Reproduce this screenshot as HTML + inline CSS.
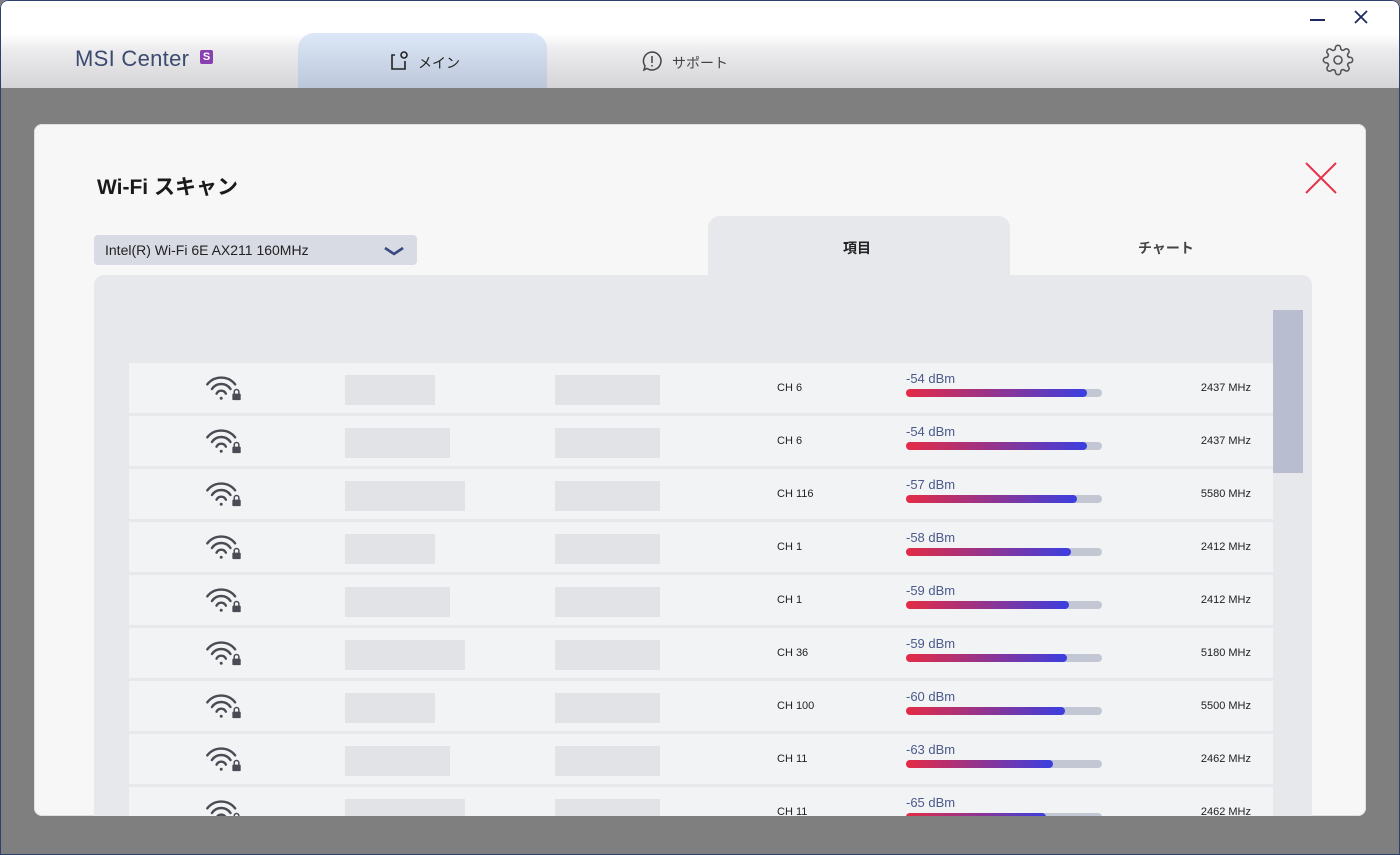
<!DOCTYPE html>
<html><head><meta charset="utf-8"><style>
*{margin:0;padding:0;box-sizing:border-box}
body{width:1400px;height:855px;overflow:hidden;position:relative;font-family:"Liberation Sans","Noto Sans CJK JP",sans-serif;background:#7f7f7f}
.win{position:absolute;inset:0;border-radius:8px 8px 0 0;overflow:hidden;background:#7f7f7f}
.frame{position:absolute;inset:0;border:1px solid #2f3f6e;border-radius:8px 8px 0 0;pointer-events:none}
.hdr{position:absolute;left:0;top:0;width:1400px;height:88px;background:linear-gradient(#fff 0,#fff 34px,#ececee 50px,#d5d5d7 88px)}
.abs{position:absolute}
.dlg{position:absolute;left:34px;top:124px;width:1332px;height:692px;background:#f7f7f7;border-radius:8px;box-shadow:inset 0 0 0 1px #e0e0e0;overflow:hidden}
.row{position:absolute;left:95px;width:1144px;height:50px;background:#f2f3f5}
.blk{position:absolute;background:#e2e3e6}
.bar{position:absolute;left:777px;top:26px;width:196px;height:8px;background:#c3c7d4;border-radius:4px}
.fill{height:8px;border-radius:4px;background:linear-gradient(90deg,#e42b45,#9a3388 45%,#3a3fe0)}
.db{position:absolute;left:777px;top:8px;font-size:13px;color:#4a5a8a}
.ch{position:absolute;left:648px;top:19px;font-size:11px;color:#222}
.mhz{position:absolute;right:22px;top:19px;font-size:11px;color:#222}
</style></head><body><div class="win">
<div class="hdr">
<div class="abs" style="left:75px;top:46px;font-size:22px;color:#3c4a70;letter-spacing:0.3px">MSI Center</div>
<div class="abs" style="left:200px;top:50px;width:13px;height:14px;background:#8a3fb0;color:#fff;font-size:11px;font-weight:bold;text-align:center;line-height:14px;border-radius:2px">S</div>
<div class="abs" style="left:298px;top:33px;width:249px;height:55px;background:linear-gradient(#dce8f7,#bcc8da);border-radius:16px 16px 0 0"></div>
<svg class="abs" style="left:388px;top:50px" width="22" height="22" viewBox="0 0 22 22" fill="none" stroke="#222" stroke-width="1.6"><path d="M7 5H4v14h13v-8"/><circle cx="16" cy="5" r="3"/></svg>
<div class="abs" style="left:418px;top:53px;font-size:14px;color:#222">メイン</div>
<svg class="abs" style="left:641px;top:50px" width="22" height="22" viewBox="0 0 22 22" fill="none" stroke="#444" stroke-width="1.5"><path d="M11 2a9 9 0 1 1-5 16.5L3 20l1-4A9 9 0 0 1 11 2z"/><path d="M11 6v7M11 15v1.5"/></svg>
<div class="abs" style="left:672px;top:53px;font-size:14px;color:#444">サポート</div>
<div class="abs" style="left:1310px;top:19px;width:15px;height:2px;background:#1d2a60"></div>
<svg class="abs" style="left:1354px;top:10px" width="14" height="14" viewBox="0 0 14 14" stroke="#1d2a60" stroke-width="1.8"><path d="M1 1l12 12M13 1L1 13"/></svg>
<svg class="abs" style="left:1322px;top:44px" width="32" height="32" viewBox="0 0 24 24" fill="none" stroke="#555" stroke-width="1.2"><circle cx="12" cy="12" r="3"/><path d="M19.4 15a1.65 1.65 0 0 0 .33 1.82l.06.06a2 2 0 1 1-2.830 2.83l-.06-.06a1.65 1.65 0 0 0-1.82-.33 1.65 1.65 0 0 0-1 1.51V21a2 2 0 1 1-4 0v-.09A1.65 1.65 0 0 0 9 19.4a1.65 1.65 0 0 0-1.82.33l-.06.06a2 2 0 1 1-2.83-2.830l.06-.06a1.65 1.65 0 0 0 .33-1.82 1.65 1.65 0 0 0-1.51-1H3a2 2 0 1 1 0-4h.09A1.65 1.65 0 0 0 4.6 9a1.65 1.65 0 0 0-.33-1.82l-.06-.06a2 2 0 1 1 2.83-2.83l.06.06a1.65 1.65 0 0 0 1.820.33H9a1.65 1.65 0 0 0 1-1.51V3a2 2 0 1 1 4 0v.09a1.65 1.65 0 0 0 1 1.51 1.65 1.65 0 0 0 1.82-.33l.06-.06a2 2 0 1 1 2.83 2.830l-.06.06a1.65 1.65 0 0 0-.33 1.82V9a1.65 1.65 0 0 0 1.51 1H21a2 2 0 1 1 0 4h-.09a1.65 1.65 0 0 0-1.51 1z"/></svg>
</div>
<div class="dlg">
<div class="abs" style="left:63px;top:47px;font-size:21px;font-weight:bold;color:#1a1a1a">Wi-Fi スキャン</div>
<svg class="abs" style="left:1271px;top:38px" width="32" height="32" viewBox="0 0 32 32" stroke="#e8344a" stroke-width="2"><path d="M1 1l30 30M31 1L1 31"/></svg>
<div class="abs" style="left:60px;top:111px;width:323px;height:30px;background:#d8dae4;border-radius:4px"></div>
<div class="abs" style="left:71px;top:118px;font-size:14px;color:#222">Intel(R) Wi-Fi 6E AX211 160MHz</div>
<svg class="abs" style="left:349px;top:121px" width="22" height="12" viewBox="0 0 22 12" fill="none" stroke="#3a4a80" stroke-width="2.6"><path d="M2 3l9 6 9-6"/></svg>
<div class="abs" style="left:674px;top:92px;width:302px;height:62px;background:#e7e8ec;border-radius:12px 12px 0 0"></div>
<div class="abs" style="left:809px;top:114px;font-size:14px;font-weight:bold;color:#222">項目</div>
<div class="abs" style="left:1104px;top:114px;font-size:14px;font-weight:bold;color:#444">チャート</div>
<div class="abs" style="left:60px;top:151px;width:1218px;height:560px;background:#e7e8ec;border-radius:10px 10px 0 0;overflow:hidden">
<div class="abs" style="left:1179px;top:35px;width:30px;height:163px;background:#b8bdcf"></div>
<div id="rows"></div>
</div>
</div>
<div class="frame"></div>
</div>
<script>
var d=[["CH 6",-54,181,2437],["CH 6",-54,181,2437],["CH 116",-57,171,5580],["CH 1",-58,165,2412],["CH 1",-59,163,2412],["CH 36",-59,161,5180],["CH 100",-60,159,5500],["CH 11",-63,147,2462],["CH 11",-65,140,2462]];
var h="";d.forEach(function(r,i){var t=88+53*i;
h+='<div class="row" style="left:35px;top:'+t+'px"><svg style="position:absolute;left:75px;top:13px" width="40" height="26" viewBox="0 0 42 28" fill="none" stroke="#4a4c55" stroke-width="2.6" stroke-linecap="round"><path d="M3 9a19 19 0 0 1 30 0M8 14a12 12 0 0 1 20 0M13 19a5.5 5.5 0 0 1 10 0"/><circle cx="18" cy="24" r="1.6" fill="#4a4c55" stroke="none"/><rect x="30" y="19" width="9" height="7" rx="1" fill="#4a4c55" stroke="none"/><path d="M32 19v-2a2.5 2.5 0 0 1 5 0v2" stroke-width="1.6"/></svg>'+
'<div class="blk" style="left:216px;top:12px;width:'+(90+(i%3)*15)+'px;height:30px"></div><div class="blk" style="left:426px;top:12px;width:105px;height:30px"></div>'+
'<div class="ch">'+r[0]+'</div><div class="db">'+r[1]+' dBm</div><div class="bar"><div class="fill" style="width:'+r[2]+'px"></div></div><div class="mhz">'+r[3]+' MHz</div></div>';});
document.getElementById("rows").innerHTML=h;
</script>
</body></html>
